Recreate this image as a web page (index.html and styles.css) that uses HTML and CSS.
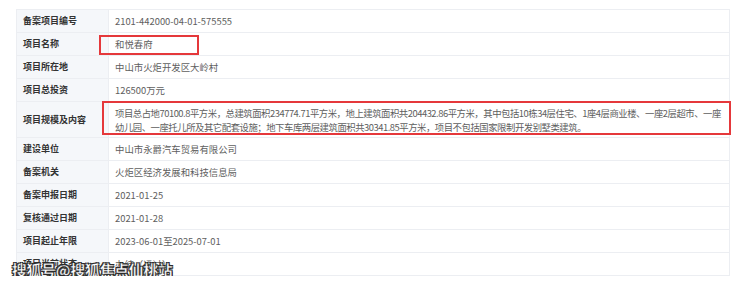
FILE: index.html
```html
<!DOCTYPE html>
<html lang="zh-CN">
<head>
<meta charset="utf-8">
<title>备案项目信息</title>
<link rel="stylesheet" href="styles.css">
</head>
<body>
<div class="wrap">
  <table class="info">
    <tbody>
      <tr><th>备案项目编号</th><td>2101-442000-04-01-575555</td></tr>
      <tr><th>项目名称</th><td>和悦春府</td></tr>
      <tr><th>项目所在地</th><td>中山市火炬开发区大岭村</td></tr>
      <tr><th>项目总投资</th><td>126500万元</td></tr>
      <tr class="tall"><th>项目规模及内容</th><td>项目总占地70100.8平方米，总建筑面积234774.71平方米，地上建筑面积共204432.86平方米，其中包括10栋34层住宅、1座4层商业楼、一座2层超市、一座幼儿园、一座托儿所及其它配套设施；地下车库两层建筑面积共30341.85平方米，项目不包括国家限制开发别墅类建筑。</td></tr>
      <tr><th>建设单位</th><td>中山市永爵汽车贸易有限公司</td></tr>
      <tr><th>备案机关</th><td>火炬区经济发展和科技信息局</td></tr>
      <tr><th>备案申报日期</th><td>2021-01-25</td></tr>
      <tr><th>复核通过日期</th><td>2021-01-28</td></tr>
      <tr><th>项目起止年限</th><td>2023-06-01至2025-07-01</td></tr>
      <tr><th>项目当前状态</th><td>办结（通过）</td></tr>
    </tbody>
  </table>
  <div class="mark mark-name"></div>
  <div class="mark mark-scale"></div>
  <div class="watermark">搜狐号@搜狐焦点仙桃站</div>
</div>
</body>
</html>
```
FILE: styles.css
```css
html, body {
  margin: 0;
  padding: 0;
  background: #ffffff;
}
body {
  font-family: "Noto Sans CJK SC", "Microsoft YaHei", sans-serif;
  overflow: hidden;
}
.wrap {
  position: relative;
  width: 714px;
  margin: 9px 0 0 16px;
}
.info {
  width: 714px;
  border-collapse: collapse;
  border: 1px solid #e6e8ec;
  table-layout: fixed;
}
.info th, .info td {
  border: 1px solid #eceef2;
  height: 22px;
  padding: 0 6px;
  vertical-align: middle;
  text-align: left;
  line-height: 14px;
}
.info th {
  width: 79px;
  background: #f5f7fa;
  color: #333333;
  font-weight: bold;
  font-size: 9px;
}
.info td {
  color: #5e5e5e;
  font-size: 9.4px;
  background: #ffffff;
}
.info tr.tall td, .info tr.tall th {
  height: 35px;
}
.info tr.tall td {
  padding-right: 4px;
  letter-spacing: -0.48px;
}
.mark {
  position: absolute;
  border: 2px solid #e5383b;
  box-sizing: border-box;
}
.mark-name {
  left: 83px;
  top: 26px;
  width: 100px;
  height: 20px;
}
.mark-scale {
  left: 86px;
  top: 92px;
  width: 629px;
  height: 34px;
}
.watermark {
  position: absolute;
  left: -4px;
  top: 252px;
  font-size: 14.6px;
  font-weight: bold;
  line-height: 18px;
  color: #ffffff;
  -webkit-text-stroke: 0.3px #333;
  text-shadow: 1px 1px 0 #2a2a2a, -1px -1px 0 #2a2a2a, 1px -1px 0 #2a2a2a, -1px 1px 0 #2a2a2a;
  white-space: nowrap;
}
```
